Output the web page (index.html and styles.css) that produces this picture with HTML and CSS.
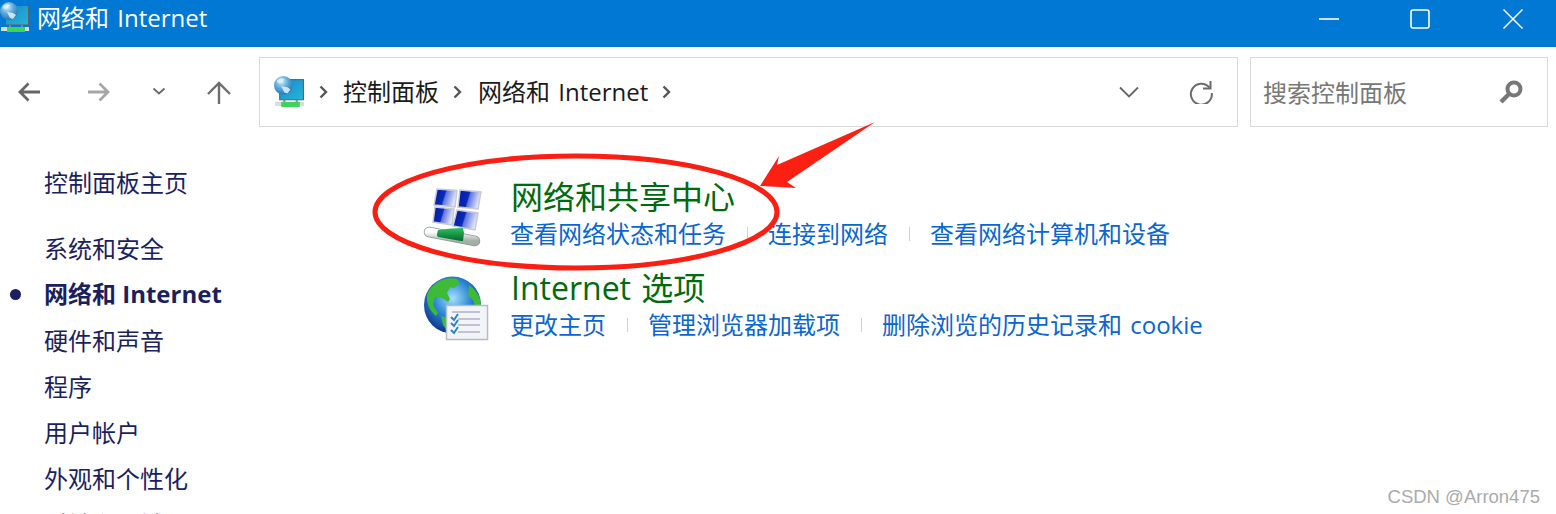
FILE: index.html
```html
<!DOCTYPE html>
<html lang="zh-CN">
<head>
<meta charset="utf-8">
<title>网络和 Internet</title>
<link rel="stylesheet" href="styles.css">
</head>
<body>
<svg class="defs" width="0" height="0" aria-hidden="true">
  <defs>
    <linearGradient id="screen" x1="0" y1="0" x2="1" y2="1"><stop offset="0" stop-color="#1a86c8"/><stop offset="1" stop-color="#25b8d8"/></linearGradient>
    <radialGradient id="sphere" cx=".4" cy=".3" r=".8"><stop offset="0" stop-color="#d4effb"/><stop offset=".45" stop-color="#5aa9dc"/><stop offset="1" stop-color="#1a6aa8"/></radialGradient>
    <linearGradient id="pane" x1="0" y1="0" x2="1" y2=".25"><stop offset="0" stop-color="#001a9e"/><stop offset=".5" stop-color="#0a2ab8"/><stop offset=".56" stop-color="#5f74dc"/><stop offset="1" stop-color="#e2e8fb"/></linearGradient>
    <linearGradient id="tube" x1="0" y1="0" x2="0" y2="1"><stop offset="0" stop-color="#ffffff"/><stop offset="1" stop-color="#a3aea7"/></linearGradient>
    <linearGradient id="tubeg" x1="0" y1="0" x2="0" y2="1"><stop offset="0" stop-color="#2cc060"/><stop offset="1" stop-color="#04692f"/></linearGradient>
    <radialGradient id="earth" cx=".5" cy=".38" r=".65"><stop offset="0" stop-color="#a6e0fa"/><stop offset=".5" stop-color="#2a86d6"/><stop offset="1" stop-color="#0a2a80"/></radialGradient>
    <symbol id="net" viewBox="0 0 30 30">
      <rect x="5.500" y="3.500" width="23" height="19.500" fill="url(#screen)" stroke="#56616b" stroke-width="1"/>
      <rect x="1" y="25" width="28" height="4" fill="#d8dcdc"/>
      <rect x="7" y="25" width="18" height="5" fill="#3ed45c"/>
      <rect x="9" y="23" width="2" height="2" fill="#7a8a80"/>
      <rect x="21" y="23" width="2" height="2" fill="#7a8a80"/>
      <circle cx="9" cy="9" r="9" fill="url(#sphere)"/>
      <path d="M3 4c3-2 5-2 7-1l-2 3-3 1-2-1zM7 10l6 1 3 2-3 4-3-1z" fill="#e4f1f8" opacity=".85"/>
    </symbol>
  </defs>
</svg>

<header class="titlebar">
  <svg class="title-icon"><use href="#net"/></svg>
  <span class="title-text">网络和 Internet</span>
  <div class="winctl">
    <svg class="winbtn" viewBox="0 0 22 22"><path d="M1 11h20" stroke="#fff" stroke-width="1.600" fill="none"/></svg>
    <svg class="winbtn" viewBox="0 0 22 22"><rect x="2" y="2" width="18" height="18" rx="2" stroke="#fff" stroke-width="1.600" fill="none"/></svg>
    <svg class="winbtn" viewBox="0 0 22 22"><path d="M1.500 1.500l19 19M20.500 1.500l-19 19" stroke="#fff" stroke-width="1.500" fill="none"/></svg>
  </div>
</header>

<nav class="navbar">
  <div class="navbtns">
    <svg class="nav-arrow" viewBox="0 0 24 24"><path d="M23 12H3M11.500 3.500L3 12l8.500 8.500" stroke="#666" stroke-width="2.800" fill="none"/></svg>
    <svg class="nav-arrow fwd" viewBox="0 0 24 24"><path d="M1 12h20M12.500 3.500L21 12l-8.500 8.500" stroke="#a6a6a6" stroke-width="2.800" fill="none"/></svg>
    <svg class="nav-chev" viewBox="0 0 14 8"><path d="M1.500 1.500L7 6.500l5.500-5" stroke="#666" stroke-width="1.700" fill="none"/></svg>
    <svg class="nav-arrow up" viewBox="0 0 24 24"><path d="M12 24V3M1 14L12 3l11 11" stroke="#6e6e6e" stroke-width="2.400" fill="none"/></svg>
  </div>
  <div class="address">
    <svg class="addr-icon"><use href="#net"/></svg>
    <svg class="crumb-sep" viewBox="0 0 9 14"><path d="M1.500 1.500L7 7l-5.500 5.500" stroke="#555" stroke-width="2.400" fill="none"/></svg>
    <span class="crumb">控制面板</span>
    <svg class="crumb-sep" viewBox="0 0 9 14"><path d="M1.500 1.500L7 7l-5.500 5.500" stroke="#555" stroke-width="2.400" fill="none"/></svg>
    <span class="crumb">网络和 Internet</span>
    <svg class="crumb-sep" viewBox="0 0 9 14"><path d="M1.500 1.500L7 7l-5.500 5.500" stroke="#555" stroke-width="2.400" fill="none"/></svg>
    <svg class="addr-drop" viewBox="0 0 20 12"><path d="M1 1.500l9 9 9-9" stroke="#666" stroke-width="1.800" fill="none"/></svg>
    <svg class="addr-refresh" viewBox="0 0 24 24"><path d="M20.500 7.500A10.500 10.500 0 1 0 22.800 13" stroke="#6b6b6b" stroke-width="2" fill="none"/><path d="M21.500 1v7.500H14" stroke="#6b6b6b" stroke-width="2" fill="none"/></svg>
  </div>
  <div class="search">
    <span class="search-text">搜索控制面板</span>
    <svg class="search-icon" viewBox="0 0 24 24"><circle cx="15" cy="9" r="6.500" stroke="#777" stroke-width="4" fill="none"/><path d="M10 14l-8 8" stroke="#777" stroke-width="4.500"/></svg>
  </div>
</nav>

<main class="main">
  <aside class="sidebar">
    <a class="side-item side-home">控制面板主页</a>
    <a class="side-item">系统和安全</a>
    <a class="side-item active">网络和 Internet</a>
    <a class="side-item">硬件和声音</a>
    <a class="side-item">程序</a>
    <a class="side-item">用户帐户</a>
    <a class="side-item">外观和个性化</a>
    <a class="side-item">时钟和区域</a>
  </aside>
  <section class="content">
    <article class="cat">
      <svg class="cat-icon" viewBox="0 0 66 66">
        <g stroke="#c6cad2" stroke-width="1.500">
          <path d="M14 2l20 1.500-2 16.500-21-2z" fill="url(#pane)"/>
          <path d="M37 3l21 2-3 17-20-2z" fill="url(#pane)"/>
          <path d="M12 20l19 2-2 16-19-3z" fill="url(#pane)"/>
          <path d="M34 23l21 3-3 17-22-4z" fill="url(#pane)"/>
        </g>
        <path d="M6 45l46 9" stroke="#8c9690" stroke-width="10.500" stroke-linecap="round" fill="none"/>
        <path d="M6 45l46 9" stroke="url(#tube)" stroke-width="9" stroke-linecap="round" fill="none"/>
        <path d="M15 43l13-1.500 12-.5 1 5-1 8-2 0-23-4a3 3 0 0 1-1-3z" fill="url(#tubeg)"/>
      </svg>
      <div class="cat-body">
        <h2 class="cat-title">网络和共享中心</h2>
        <div class="cat-links">
          <a class="cat-link">查看网络状态和任务</a>
          <span class="sep"></span>
          <a class="cat-link">连接到网络</a>
          <span class="sep"></span>
          <a class="cat-link">查看网络计算机和设备</a>
        </div>
      </div>
    </article>
    <article class="cat cat-second">
      <svg class="cat-icon" viewBox="0 0 66 66">
        <circle cx="29.500" cy="27" r="28.500" fill="url(#earth)"/>
        <path d="M12 6c6-5 14-7 22-5l3 4-6 5-4-1-3 6 3 6-2 3-6-4-7-1-2 8 5 8-2 3c-6-5-10-13-9-21 1-4 4-8 8-11zM46 7c6 4 11 11 12 18l-1 6-5-3-2-6-5-4zM18 38l8 2 5 7 1 8-6 0-6-8z" fill="#3dbb37"/>
        <rect x="23.500" y="27.500" width="41" height="34" fill="#f3f4f7" stroke="#b6bcc6" stroke-width="1.500"/>
        <g stroke="#8e90ac" stroke-width="1.200"><path d="M29 34h28M35 41h22M35 47h22M35 54h22"/></g>
        <g stroke="#2b84c9" stroke-width="2" fill="none"><path d="M28 39l3 3 4-6M28 45l3 3 4-6M28 52l3 3 4-6"/></g>
      </svg>
      <div class="cat-body">
        <h2 class="cat-title">Internet 选项</h2>
        <div class="cat-links">
          <a class="cat-link">更改主页</a>
          <span class="sep"></span>
          <a class="cat-link">管理浏览器加载项</a>
          <span class="sep"></span>
          <a class="cat-link">删除浏览的历史记录和 cookie</a>
        </div>
      </div>
    </article>
  </section>
</main>

<svg class="annotation" viewBox="0 0 1556 514" aria-hidden="true">
  <ellipse cx="576" cy="212" rx="201" ry="56" fill="none" stroke="#fb1e12" stroke-width="5"/>
  <polygon points="875,122 787,182 796,188 760,186 779,156 777,165" fill="#fb2012"/>
</svg>

<div class="watermark">CSDN @Arron475</div>
</body>
</html>
```

FILE: styles.css
```css
* { box-sizing: border-box; }
html, body {
  margin: 0;
  height: 514px;
  overflow: hidden;
  background: #fff;
}
body {
  position: relative;
  font-family: "Open Sans", "Noto Sans CJK SC", sans-serif;
  font-size: 24px;
  word-spacing: 2px;
  color: #1a1a1a;
}
.defs { position: absolute; }

.titlebar {
  display: flex;
  align-items: flex-start;
  height: 47px;
  background: #0078d4;
  color: #fff;
}
.title-icon { width: 30px; height: 30px; margin-top: 2px; flex: none; }
.title-text { margin-left: 7px; line-height: 36px; }
.winctl {
  display: flex;
  gap: 70px;
  margin: 8px 32px 0 auto;
}
.winbtn { width: 22px; height: 22px; display: block; }
.winbtn:nth-child(2) { margin: 0 1px 0 -1px; }

.navbar {
  display: flex;
  align-items: center;
  height: 90px;
  padding: 10px 8px 10px 0;
}
.navbtns {
  display: flex;
  align-items: center;
  width: 259px;
  padding-left: 17px;
  flex: none;
}
.nav-arrow { width: 24px; height: 24px; flex: none; }
.nav-arrow.fwd { margin-left: 46px; }
.nav-chev { width: 14px; height: 8px; margin: -2px 0 0 41px; flex: none; }
.nav-arrow.up { margin-left: 41px; }

.address, .search {
  display: flex;
  align-items: center;
  height: 70px;
  border: 1px solid #d9d9d9;
}
.address { flex: 1; padding-left: 14px; }
.addr-icon { width: 31px; height: 31px; flex: none; margin-top: -2px; }
.crumb-sep { width: 9px; height: 14px; margin: 0 14px; flex: none; }
.crumb { line-height: 34px; white-space: nowrap; margin-left: 1px; }
.crumb:nth-of-type(2) { margin-left: 2px; }
.addr-drop { width: 20px; height: 12px; margin-left: auto; flex: none; }
.addr-refresh { width: 24px; height: 24px; margin: 0 24px 0 50px; flex: none; }

.search {
  width: 298px;
  margin-left: 12px;
  padding: 0 24px 0 12px;
  justify-content: space-between;
  flex: none;
}
.search-text { color: #777; margin-top: -2px; }
.search-icon { width: 24px; height: 24px; flex: none; }

.main { display: flex; height: 377px; overflow: hidden; }
.sidebar {
  display: flex;
  flex-direction: column;
  width: 259px;
  flex: none;
  padding: 23px 0 0 44px;
}
.side-item {
  position: relative;
  height: 46px;
  line-height: 46px;
  color: #1b1f5e;
  white-space: nowrap;
  flex: none;
}
.side-home { margin-bottom: 20px; }
.active { font-weight: 700; word-spacing: 0; line-height: 44px; }
.active::before {
  content: "";
  position: absolute;
  left: -34px;
  top: 17px;
  width: 11px;
  height: 11px;
  border-radius: 50%;
  background: #1b1f5e;
}

.content { padding: 40px 0 0 164px; flex: 1; }
.cat { display: flex; align-items: flex-start; }
.cat-second { margin-top: 15px; }
.cat-icon { width: 66px; height: 66px; margin-top: 10px; flex: none; display: block; overflow: visible; }
.cat-body { margin-left: 22px; }
.cat-title {
  margin: 0;
  font-size: 32px;
  line-height: 40px;
  font-weight: 400;
  color: #006a0e;
  white-space: nowrap;
}
.cat-links {
  display: flex;
  align-items: center;
  gap: 20.500px;
  height: 34px;
  margin-left: -1px;
  white-space: nowrap;
}
.cat-link { color: #0a66d0; line-height: 34px; }
.sep { width: 1px; height: 14px; background: #d0d0d0; }

.annotation {
  position: absolute;
  left: 0;
  top: 0;
  width: 1556px;
  height: 514px;
  pointer-events: none;
}
.watermark {
  position: absolute;
  right: 16px;
  bottom: 6px;
  font-family: "Liberation Sans", sans-serif;
  font-size: 18.500px;
  word-spacing: 0;
  line-height: 22px;
  color: #ababab;
}
```
